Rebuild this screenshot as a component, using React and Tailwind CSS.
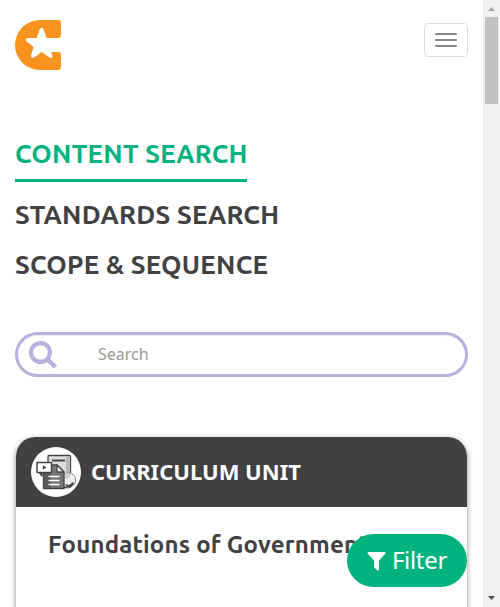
import React from "react";

function Logo() {
  return (
    <svg className="h-[50px] w-[46px]" viewBox="0 0 46 50" role="img" aria-label="Home">
      <path
        fill="#f7931e"
        d="M25 0H43Q46 0 46 3V15Q46 18 43 18H31.6L28.7 9.500Q26.6 6 24.6 9.500L21.600 18H13Q9.500 18.500 11.500 21.500L18.600 27L16 35.500Q16 39 19 37.500L26.600 32L34.500 37.500Q38 39 37.300 35.500L36 32H43Q46 32 46 35V47Q46 50 43 50H25A25 25 0 0 1 25 0Z"
      />
    </svg>
  );
}

function UnitIcon() {
  return (
    <svg className="h-[50px] w-[50px] shrink-0" viewBox="0 0 50 50" aria-hidden="true">
      <circle cx="25" cy="25" r="25" fill="#fff" />
      <g stroke="#444" strokeWidth="1.3" strokeLinejoin="round">
        <rect x="17" y="8.500" width="22.500" height="32" rx="1" fill="#dedede" />
        <path d="M35 9.500H39V30H35Z" fill="#b8b8b8" stroke="none" />
        <path d="M21 13.500H34" strokeWidth="2" />
        <circle cx="37.500" cy="33" r="7.200" fill="#efefef" stroke="#888" strokeWidth="1" />
        <path d="M33 27Q37 25 40 27Q39 32 34 32Z" fill="#ccc" stroke="none" />
        <path d="M34 37L38 38L42 35L43 37L40 40L36 40Z" fill="#4b4b4b" stroke="none" />
        <path d="M12.500 18H26L33 25V41.500H12.500Z" fill="#777" />
        <path d="M13 18H20V41H13Z" fill="#5a5a5a" stroke="none" />
        <path d="M26 18V25H33Z" fill="#f5f5f5" />
        <path d="M8 25L11 29V25Z" fill="#444" />
        <rect x="6" y="15.500" width="14.500" height="10" fill="#fff" strokeWidth="1.500" />
        <path d="M11.800 18.500V22.500L15.500 20.500Z" fill="#333" stroke="none" />
        <path d="M17.500 29.500H28.500M17.500 33.500H28.500M17.500 37.500H28.500" stroke="#fff" strokeWidth="1.500" />
      </g>
    </svg>
  );
}

function Scrollbar() {
  return (
    <div className="flex w-[17px] shrink-0 flex-col items-center bg-[#f0f0f0]">
      <svg className="h-[17px] w-[17px] shrink-0" viewBox="0 0 17 17">
        <path d="M5 11L8.500 7L12 11Z" fill="#a3a3a3" />
      </svg>
      <div className="h-[87px] w-[13px] bg-[#c1c1c1]" />
      <svg className="mt-auto h-[17px] w-[17px] shrink-0" viewBox="0 0 17 17">
        <path d="M5 6L8.500 10L12 6Z" fill="#505050" />
      </svg>
    </div>
  );
}

export default function App() {
  return (
    <div className="relative flex h-[607px] w-[500px] overflow-hidden bg-white font-['Noto_Sans',sans-serif] text-[#414141]">
      <main className="flex w-[483px] flex-col px-[15px] pt-5">
        <header className="flex h-[50px] items-start justify-between">
          <Logo />
          <button aria-label="Menu" className="mt-[3px] flex h-[34px] w-11 flex-col items-center justify-center gap-1 rounded-[4px] border border-[#ddd]">
            <span className="h-0.5 w-[22px] rounded-[1px] bg-[#888]" />
            <span className="h-0.5 w-[22px] rounded-[1px] bg-[#888]" />
            <span className="h-0.5 w-[22px] rounded-[1px] bg-[#888]" />
          </button>
        </header>
        <nav className="mt-[64px] flex flex-col items-start whitespace-nowrap font-['Ubuntu','Noto_Sans',sans-serif] text-[26px] font-semibold leading-[40px] tracking-[0.27px]">
          <a className="h-[48px] w-[232px] border-b-[3px] border-[#00b27e] text-[#00b27e]">CONTENT SEARCH</a>
          <a className="mt-[13px]">STANDARDS SEARCH</a>
          <a className="mt-2.5">SCOPE &amp; SEQUENCE</a>
        </nav>
        <div className="mt-[47px] flex h-[45px] shrink-0 items-center rounded-full border-[3px] border-[#b8b1dc] pl-[11px] shadow-[inset_0_1px_1px_#00000013]">
          <svg className="mt-0.5 h-[29px] w-[29px] shrink-0" viewBox="0 0 29 29" fill="none" stroke="#b8b1dc">
            <circle cx="11.500" cy="11.500" r="9.400" strokeWidth="4.200" />
            <path d="M18.500 18.500L26.500 26.200" strokeWidth="4.600" />
          </svg>
          <span className="-mt-0.5 ml-10 text-[16px] leading-[22px] text-[#999]">Search</span>
        </div>
        <section className="mt-[60px] h-[240px] shrink-0 overflow-hidden rounded-t-[20px] border-x border-[#ccc] shadow-[0_1px_5px_#00000050]">
          <div className="-mx-px flex h-[70px] items-center gap-2.5 bg-[#414141] pl-4 text-white">
            <UnitIcon />
            <span className="-mt-0.5 text-[22px] font-bold leading-[30px]">CURRICULUM UNIT</span>
          </div>
          <h2 className="whitespace-nowrap pl-8 pt-[21px] font-['Ubuntu','Noto_Sans',sans-serif] text-[24px] font-semibold leading-[34px] tracking-[0.2px]">Foundations of Government</h2>
        </section>
      </main>
      <Scrollbar />
      <button className="absolute left-[347px] top-[534px] flex h-[53px] w-[120px] items-center justify-center gap-[6px] rounded-full bg-[#00b27e] text-[24px] leading-[33px] tracking-[-0.3px] text-white">
        <svg className="mt-0.5 h-[19px] w-[19px]" viewBox="0 0 19 19" fill="#fff">
          <path d="M1.200 0H17.800Q19 .8 18 2L12 8.400V17.500Q11.700 19.300 10.500 18.500L7.500 15.800Q7 15.300 7 14.700V8.400L1 2Q0 .8 1.200 0Z" />
        </svg>
        <span className="-mt-0.5">Filter</span>
      </button>
    </div>
  );
}
